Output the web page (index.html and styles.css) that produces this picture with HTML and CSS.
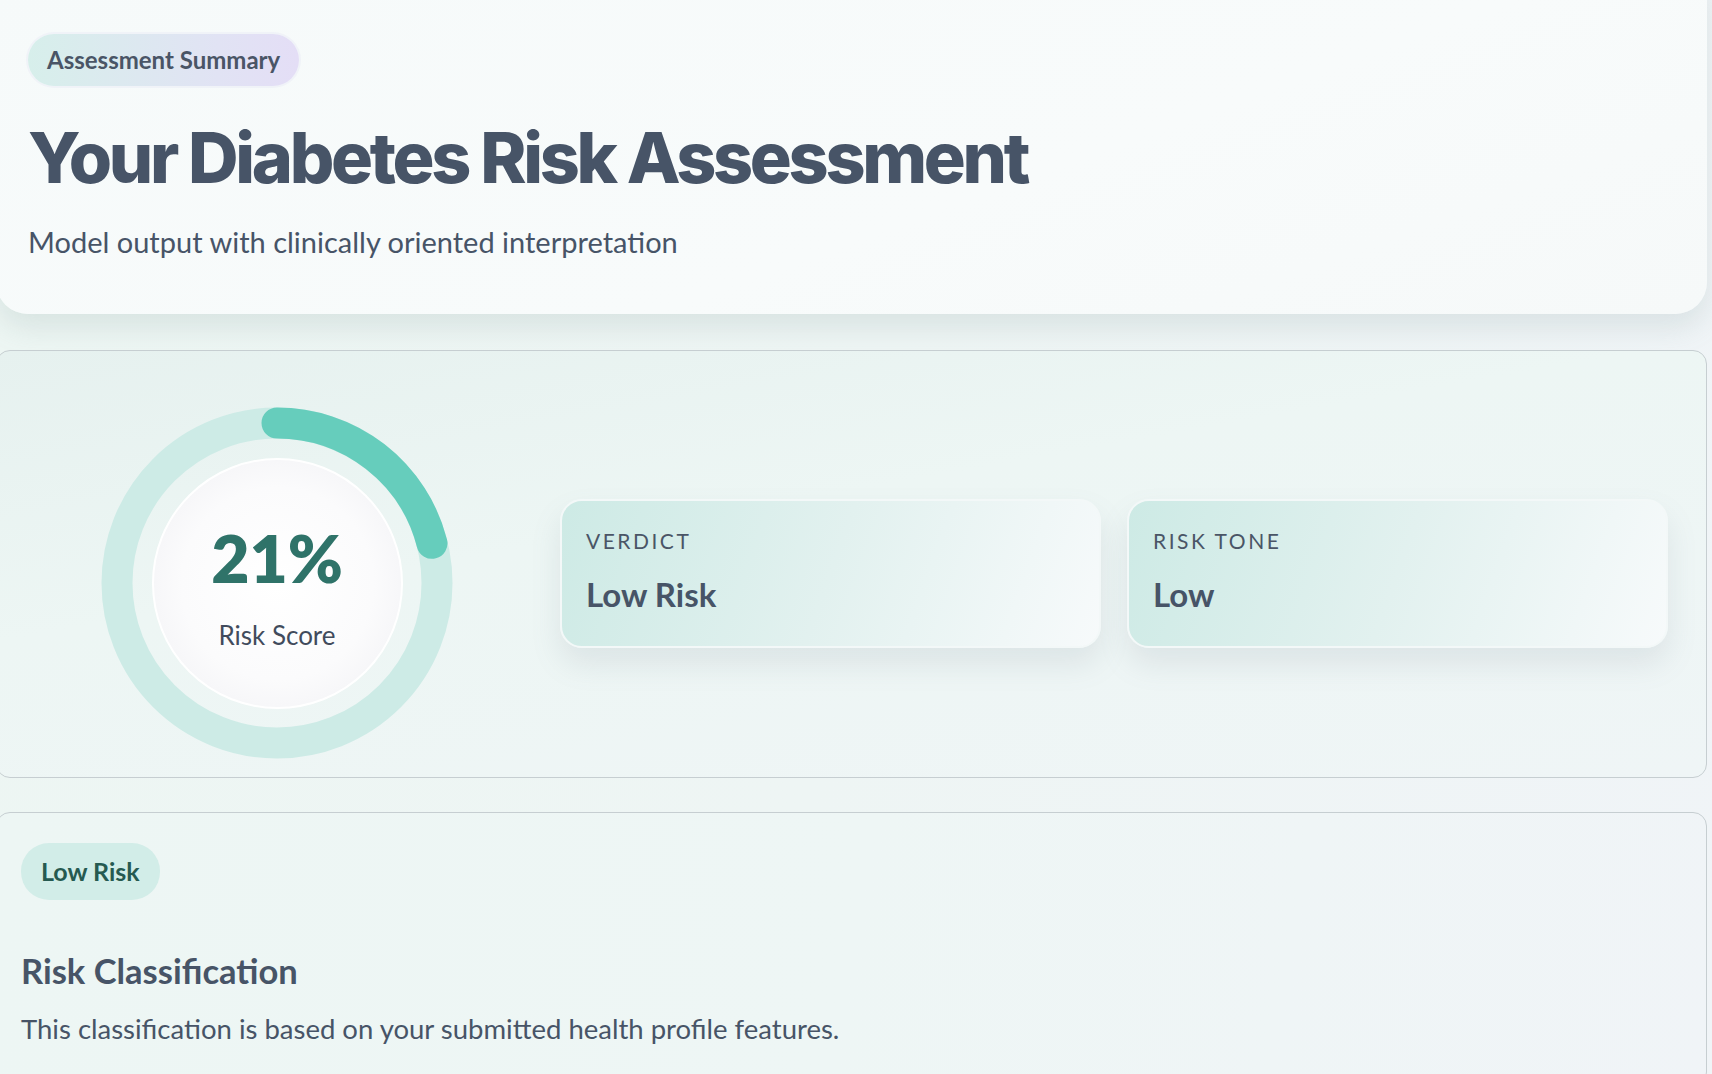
FILE: index.html
```html
<!DOCTYPE html>
<html lang="en">
<head>
    <meta charset="UTF-8">
    <title>Diabetes Risk Assessment</title>
    <link rel="stylesheet" href="styles.css">
</head>
<body>
    <div class="page">
        <header class="hero-card">
            <span class="eyebrow">Assessment Summary</span>
            <h1 class="hero-title">Your Diabetes Risk Assessment</h1>
            <p class="hero-subtitle">Model output with clinically oriented interpretation</p>
        </header>

        <section class="score-panel">
            <div class="gauge-col">
                <div class="gauge">
                    <svg class="gauge-ring" width="352" height="352" viewBox="0 0 352 352">
                        <circle cx="176" cy="176" r="160" fill="none" stroke="#cdebe6" stroke-width="31"/>
                        <circle cx="176" cy="176" r="160" fill="none" stroke="#66cdbc" stroke-width="31"
                                stroke-linecap="round" stroke-dasharray="211.1 1005.3"
                                transform="rotate(-90 176 176)"/>
                    </svg>
                    <div class="gauge-disc">
                        <div class="gauge-value">21%</div>
                        <div class="gauge-label">Risk Score</div>
                    </div>
                </div>
            </div>
            <div class="stat-grid">
                <div class="stat-card">
                    <div class="stat-label">Verdict</div>
                    <div class="stat-value">Low Risk</div>
                </div>
                <div class="stat-card">
                    <div class="stat-label">Risk Tone</div>
                    <div class="stat-value">Low</div>
                </div>
            </div>
        </section>

        <section class="class-panel">
            <span class="risk-pill">Low Risk</span>
            <h3 class="class-title">Risk Classification</h3>
            <p class="class-text">This classification is based on your submitted health profile features.</p>
        </section>
    </div>
</body>
</html>
```

FILE: styles.css
```css
body {
    margin: 0;
    font-family: Lato, "Noto Sans", sans-serif;
    color: #475467;
    background: linear-gradient(100deg, #edf6f3 0%, #eef5f4 50%, #f0f4f7 100%);
    overflow: hidden;
    height: 1074px;
}
.page {
    margin: -24px 5px 0 -4px;
}

/* top summary card */
.hero-card {
    background: linear-gradient(160deg, #f6fafa 0%, #f8fbfb 60%, #f6f9f9 100%);
    border-radius: 0 0 32px 32px;
    padding: 58px 32px 55px;
    box-shadow: 0 14px 28px rgba(120, 150, 150, 0.18);
}
.eyebrow {
    display: inline-block;
    padding: 0 19px;
    height: 52px;
    line-height: 52px;
    border-radius: 26px;
    font-size: 24px;
    font-weight: 700;
    color: #4a5566;
    background: linear-gradient(90deg, #d7efeb 0%, #e1e3f4 70%, #e4def6 100%);
    box-shadow: 0 0 0 2px #f0f3f8;
}
.hero-title {
    margin: 30px 0 0;
    font-family: Inter, sans-serif;
    font-weight: 800;
    font-size: 70px;
    line-height: 84px;
    letter-spacing: -3.3px;
    color: #475467;
}
.hero-subtitle {
    margin: 25px 0 0;
    font-size: 29px;
    line-height: 34px;
    color: #475467;
}

/* score row */
.score-panel {
    margin-top: 36px;
    display: grid;
    grid-template-columns: 560px 1fr;
    align-items: center;
    border: 1.5px solid #c6ced1;
    border-radius: 14px;
    background: linear-gradient(170deg, #e6f1ef 0%, #edf6f4 40%, #eff5f6 100%);
    padding: 56px 38px 18px 0;
}
.gauge-col {
    display: flex;
    justify-content: center;
}
.gauge {
    display: grid;
    width: 352px;
    height: 352px;
}
.gauge-ring,
.gauge-disc {
    grid-area: 1 / 1;
}
.gauge-disc {
    place-self: center;
    width: 247px;
    height: 247px;
    border-radius: 50%;
    border: 2px solid #ffffff;
    background: radial-gradient(circle, #ffffff 0%, #fbfbfc 55%, #efeff3 100%);
    display: flex;
    flex-direction: column;
    align-items: center;
    justify-content: center;
}
.gauge-value {
    font-size: 66px;
    font-weight: 800;
    line-height: 70px;
    color: #2f7369;
    margin-top: 8px;
}
.gauge-label {
    margin-top: 26px;
    font-size: 26px;
    color: #414b5c;
}

.stat-grid {
    display: grid;
    grid-template-columns: 1fr 1fr;
    gap: 26px;
    margin: 0 0 20px 3px;
}
.stat-card {
    height: 149px;
    box-sizing: border-box;
    padding: 27px 24px 0;
    border-radius: 22px;
    border: 2px solid #f3f8f8;
    background: linear-gradient(110deg, #cdeae5 0%, #e2f1ef 50%, #f7fafb 100%);
    box-shadow: 0 16px 30px rgba(110, 130, 140, 0.14);
}
.stat-label {
    font-size: 21px;
    letter-spacing: 2.5px;
    text-transform: uppercase;
    color: #4a5566;
}
.stat-value {
    margin-top: 21px;
    font-size: 33px;
    font-weight: 700;
    color: #475467;
}

/* classification block */
.class-panel {
    margin-top: 34px;
    border: 1.5px solid #c6ced1;
    border-radius: 14px;
    background: linear-gradient(100deg, #edf6f4 0%, #eef6f5 50%, #f0f4f7 100%);
    padding: 30px 24px 40px;
}
.risk-pill {
    display: inline-block;
    height: 57px;
    line-height: 57px;
    padding: 0 20px;
    border-radius: 28px;
    background: #d2ede8;
    color: #265a51;
    font-size: 25px;
    font-weight: 700;
}
.class-title {
    margin: 50px 0 0;
    font-size: 34.5px;
    font-weight: 700;
    color: #475467;
}
.class-text {
    margin: 21px 0 0;
    font-size: 27.5px;
    color: #475467;
}
```
